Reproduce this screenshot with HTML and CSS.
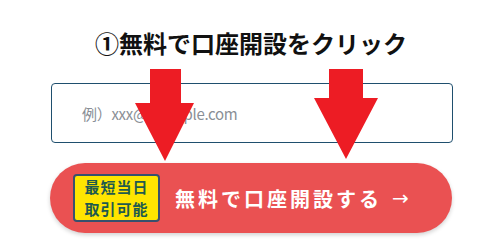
FILE: index.html
```html
<!DOCTYPE html>
<html lang="ja">
<head>
<meta charset="utf-8">
<link rel="stylesheet" href="styles.css">
</head>
<body>
<div class="page">
  <h1 class="title">①無料で口座開設をクリック</h1>
  <div class="field">
    <span class="placeholder">例）xxx@example.com</span>
  </div>
  <div class="cta">
    <div class="badge">最短当日<br>取引可能</div>
    <span class="cta-text">無料で口座開設する</span>
    <span class="cta-arrow">→</span>
  </div>
  <svg class="arrows" width="502" height="248" viewBox="0 0 502 248">
    <polygon points="150,69 181,69 181,103 194,103 165,161 135,103 150,103" fill="#ed1c24"/>
    <polygon points="329,69 363,69 363,98 378,98 346,159 314,98 329,98" fill="#ed1c24"/>
  </svg>
</div>
</body>
</html>
```
FILE: styles.css
```css
html, body {
  margin: 0;
  padding: 0;
  background: #ffffff;
}
.page {
  position: relative;
  width: 502px;
  height: 248px;
  font-family: "Noto Sans CJK JP", "Noto Sans", sans-serif;
}
.title {
  margin: 0;
  padding-top: 26px;
  height: 57px;
  box-sizing: border-box;
  text-align: center;
  font-size: 24px;
  line-height: 34px;
  font-weight: 700;
  color: #111;
  letter-spacing: 0;
}
.field {
  margin: 0 49px 0 51px;
  height: 60px;
  box-sizing: border-box;
  margin-top: 26px;
  border: 1.5px solid #1f4f6e;
  border-radius: 4px;
  display: flex;
  align-items: center;
  padding-left: 30px;
}
.placeholder {
  font-family: "Noto Sans CJK JP", "Liberation Sans", sans-serif;
  font-size: 15px;
  color: #8a8f96;
  letter-spacing: -0.3px;
}
.cta {
  margin: 20px 50px 0 50px;
  height: 70px;
  border-radius: 35px;
  background: #ea5152;
  box-shadow: 0 2px 4px rgba(0,0,0,0.18);
  display: flex;
  align-items: center;
  padding-left: 23px;
}
.badge {
  width: 87px;
  height: 48px;
  box-sizing: border-box;
  background: #ffe500;
  border: 2px solid #37506e;
  border-radius: 4px;
  color: #1f5a4e;
  font-weight: 700;
  font-size: 15px;
  line-height: 22px;
  letter-spacing: 1px;
  text-align: center;
  display: flex;
  align-items: center;
  justify-content: center;
}
.cta-text {
  margin-left: 15px;
  color: #ffffff;
  font-weight: 700;
  font-size: 20px;
  letter-spacing: 3px;
}
.cta-arrow {
  margin-left: 10px;
  color: #ffffff;
  font-family: "DejaVu Sans", sans-serif;
  font-size: 20px;
}
.arrows {
  position: absolute;
  left: 0;
  top: 0;
  pointer-events: none;
}
```
